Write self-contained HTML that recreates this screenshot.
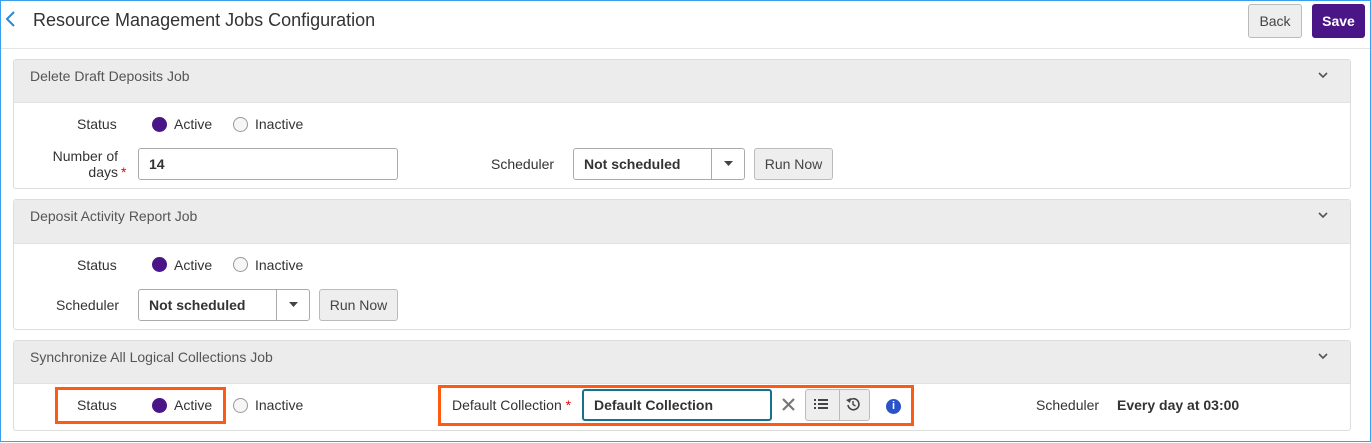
<!DOCTYPE html>
<html><head><style>
*{box-sizing:border-box;margin:0;padding:0}
body{width:1371px;height:443px;background:#fff;font-family:"Liberation Sans",Arial,sans-serif;font-size:14px;color:#333;position:relative;overflow:hidden}
.frame{position:absolute;left:0;top:0;width:1371px;height:442px;border:1px solid #3aa0ee}
.a{position:absolute;white-space:nowrap}
.panel{position:absolute;left:13px;width:1338px;border:1px solid #ddd;border-radius:3px;background:#fff}
.ph{height:43px;background:#ececec;border-bottom:1px solid #e2e2e2;padding:8px 16px;font-size:14px;color:#555}
.chev{position:absolute;right:22px;top:11px}
.radio{position:absolute;width:15px;height:15px;border-radius:50%}
.on{background:#4a1587}
.off{border:1px solid #999;background:#f6f6f6}
.inp{position:absolute;border:1px solid #aaa;border-radius:3px;background:#fff;font-weight:bold;padding:0 10px;line-height:30px}
.btn{position:absolute;border:1px solid #bbb;border-radius:3px;background:#eee;text-align:center;color:#444}
.orange{position:absolute;border:3px solid #ff5a12}
</style></head><body>
<div class="frame"></div>
<svg class="a" style="left:4px;top:10px" width="12" height="18"><path d="M10 2 L3 9 L10 16" stroke="#2b87d0" stroke-width="2" fill="none"/></svg>
<div class="a" style="left:33px;top:10px;font-size:18px;color:#333">Resource Management Jobs Configuration</div>
<div class="btn" style="left:1248px;top:4px;width:54px;height:34px;line-height:32px">Back</div>
<div class="btn" style="left:1312px;top:4px;width:53px;height:34px;line-height:32px;background:#4a1587;border-color:#4a1587;color:#fff;font-weight:bold">Save</div>
<div class="a" style="left:1px;top:48px;width:1369px;height:1px;background:#e4e4e4"></div>

<div class="panel" style="top:59px;height:130px">
<div class="ph">Delete Draft Deposits Job</div><svg class="chev" width="10" height="8"><path d="M1 2 L5 6 L9 2" stroke="#555" stroke-width="1.6" fill="none"/></svg></div>
<div class="a" style="left:77px;top:116px">Status</div>
<div class="radio on" style="left:152px;top:117px"></div><div class="a" style="left:174px;top:116px">Active</div>
<div class="radio off" style="left:233px;top:117px"></div><div class="a" style="left:255px;top:116px">Inactive</div>
<div class="a" style="left:48px;top:148px;text-align:right;width:70px;line-height:16px;white-space:normal">Number of days</div>
<div class="a" style="left:121px;top:164px;color:#e00">*</div>
<div class="inp" style="left:138px;top:148px;width:260px;height:32px">14</div>
<div class="a" style="left:491px;top:156px">Scheduler</div>
<div class="inp" style="left:573px;top:148px;width:172px;height:32px">Not scheduled</div>
<div class="a" style="left:711px;top:149px;width:1px;height:30px;background:#aaa"></div>
<svg class="a" style="left:724px;top:161px" width="9" height="6"><path d="M0 0 L9 0 L4.5 5Z" fill="#444"/></svg>
<div class="btn" style="left:754px;top:148px;width:79px;height:32px;line-height:30px">Run Now</div>

<div class="panel" style="top:199px;height:131px">
<div class="ph" style="height:44px">Deposit Activity Report Job</div><svg class="chev" width="10" height="8"><path d="M1 2 L5 6 L9 2" stroke="#555" stroke-width="1.6" fill="none"/></svg></div>
<div class="a" style="left:77px;top:257px">Status</div>
<div class="radio on" style="left:152px;top:257px"></div><div class="a" style="left:174px;top:257px">Active</div>
<div class="radio off" style="left:233px;top:257px"></div><div class="a" style="left:255px;top:257px">Inactive</div>
<div class="a" style="left:56px;top:297px">Scheduler</div>
<div class="inp" style="left:138px;top:289px;width:172px;height:32px">Not scheduled</div>
<div class="a" style="left:276px;top:290px;width:1px;height:30px;background:#aaa"></div>
<svg class="a" style="left:289px;top:302px" width="9" height="6"><path d="M0 0 L9 0 L4.5 5Z" fill="#444"/></svg>
<div class="btn" style="left:319px;top:289px;width:79px;height:32px;line-height:30px">Run Now</div>

<div class="panel" style="top:340px;height:91px">
<div class="ph">Synchronize All Logical Collections Job</div><svg class="chev" width="10" height="8"><path d="M1 2 L5 6 L9 2" stroke="#555" stroke-width="1.6" fill="none"/></svg></div>
<div class="orange" style="left:55px;top:387px;width:171px;height:37px"></div>
<div class="a" style="left:77px;top:397px">Status</div>
<div class="radio on" style="left:152px;top:398px"></div><div class="a" style="left:174px;top:397px">Active</div>
<div class="radio off" style="left:233px;top:398px"></div><div class="a" style="left:255px;top:397px">Inactive</div>
<div class="orange" style="left:438px;top:385px;width:476px;height:41px"></div>
<div class="a" style="left:452px;top:397px">Default Collection <span style="color:#e00">*</span></div>
<div class="inp" style="left:582px;top:389px;width:190px;height:32px;border:2px solid #1a6f8f;line-height:28px">Default Collection</div>
<svg class="a" style="left:782px;top:398px" width="13" height="13"><path d="M1 1 L12 12 M12 1 L1 12" stroke="#777" stroke-width="2.2"/></svg>
<div class="btn" style="left:805px;top:389px;width:65px;height:32px"></div>
<div class="a" style="left:839px;top:390px;width:1px;height:30px;background:#bbb"></div>
<svg class="a" style="left:814px;top:398px" width="16" height="12"><g fill="#444"><rect x="0" y="1" width="2" height="2"/><rect x="4" y="1" width="10" height="2"/><rect x="0" y="5" width="2" height="2"/><rect x="4" y="5" width="10" height="2"/><rect x="0" y="9" width="2" height="2"/><rect x="4" y="9" width="10" height="2"/></g></svg>
<svg class="a" style="left:846px;top:397px" width="14" height="14"><path d="M3 4 A5.5 5.5 0 1 1 2 8" stroke="#444" stroke-width="1.6" fill="none"/><path d="M0 3 L4 6 L5 1Z" fill="#444"/><path d="M7 4 V7.5 L9.5 9" stroke="#444" stroke-width="1.4" fill="none"/></svg>
<div class="a" style="left:886px;top:399px;width:15px;height:15px;border-radius:50%;background:#2a52c9;color:#fff;font-size:11px;font-weight:bold;text-align:center;line-height:15px">i</div>
<div class="a" style="left:1036px;top:397px">Scheduler</div>
<div class="a" style="left:1117px;top:397px;font-weight:bold">Every day at 03:00</div>
</body></html>
